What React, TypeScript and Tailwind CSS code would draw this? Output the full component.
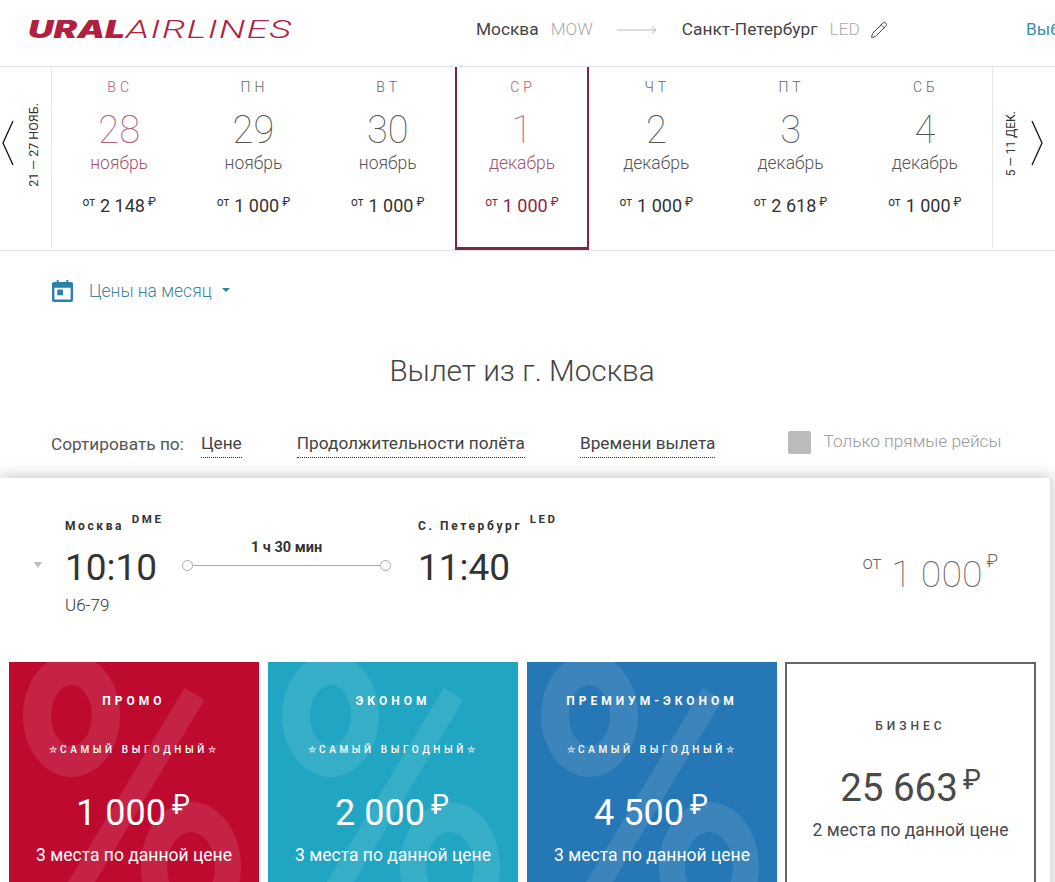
import { Pencil } from 'lucide-react'

const roboto = "font-['Roboto',sans-serif]"

const days = [
  { wd: 'ВС', num: '28', month: 'ноябрь', price: '2 148', tone: 'weekend' },
  { wd: 'ПН', num: '29', month: 'ноябрь', price: '1 000', tone: 'normal' },
  { wd: 'ВТ', num: '30', month: 'ноябрь', price: '1 000', tone: 'normal' },
  { wd: 'СР', num: '1', month: 'декабрь', price: '1 000', tone: 'active' },
  { wd: 'ЧТ', num: '2', month: 'декабрь', price: '1 000', tone: 'normal' },
  { wd: 'ПТ', num: '3', month: 'декабрь', price: '2 618', tone: 'normal' },
  { wd: 'СБ', num: '4', month: 'декабрь', price: '1 000', tone: 'normal' },
]

const fares = [
  { name: 'ПРОМО', price: '1 000', bg: 'bg-[#bf0a30]' },
  { name: 'ЭКОНОМ', price: '2 000', bg: 'bg-[#20a5c2]' },
  { name: 'ПРЕМИУМ-ЭКОНОМ', price: '4 500', bg: 'bg-[#2577b5]' },
]

function Day({ d }: { d: (typeof days)[number] }) {
  const active = d.tone === 'active'
  const weekend = d.tone === 'weekend'
  const wdColor = active || weekend ? 'text-[#b4596f]' : 'text-[#666]'
  const numColor = active || weekend ? 'text-[#b3617a]' : 'text-[#555]'
  const monthColor = active || weekend ? 'text-[#a8536c]' : 'text-[#555]'
  const priceColor = active ? 'text-[#8f1f45]' : 'text-[#333]'
  return (
    <div
      className={`flex flex-col items-center pt-[12px] ${
        active ? 'border-x-[2px] border-b-[3px] border-[#7d2747]' : ''
      }`}
    >
      <div className={`text-[14px] leading-[16px] font-light tracking-[4px] pl-[2px] ${wdColor}`}>{d.wd}</div>
      <div className={`text-[38px] leading-[44px] font-thin mt-[13px] ${numColor}`}>{d.num}</div>
      <div className={`text-[17.5px] leading-[20px] font-light mt-[1px] ${monthColor}`}>{d.month}</div>
      <div className={`flex items-start mt-[21px] ${priceColor}`}>
        <span className="text-[12px] leading-[16px] mr-[5px]">от</span>
        <span className="text-[18px] leading-[22px] mt-[1px]">{d.price}</span>
        <span className="text-[12px] leading-[16px] ml-[3px]">₽</span>
      </div>
    </div>
  )
}

function SortLink({ label, className }: { label: string; className?: string }) {
  return (
    <span className={`text-[17.25px] leading-[22px] text-[#444] border-b border-dotted border-[#333] pb-[3px] ${className ?? ''}`}>
      {label}
    </span>
  )
}

// big faded percent sign behind the fare text
function PercentBg() {
  return (
    <div className="absolute inset-0 opacity-[0.1]" aria-hidden="true">
      <div className="absolute left-[14px] top-[-8px] w-[97px] h-[123px] rounded-[50%] border-x-[28px] border-y-[31px] border-white" />
      <div className="absolute left-[174px] top-[32px] w-[23px] h-[260px] bg-white origin-top rotate-[31deg]" />
      <div className="absolute left-[132px] top-[140px] w-[100px] h-[130px] rounded-[50%] border-x-[26px] border-y-[30px] border-white" />
    </div>
  )
}

function FareCard({ f }: { f: (typeof fares)[number] }) {
  return (
    <div className={`relative overflow-hidden w-[250px] h-[260px] shrink-0 flex flex-col items-center text-white ${f.bg}`}>
      <PercentBg />
      <div className="relative text-[12px] leading-[16px] font-bold tracking-[4px] mt-[31px]">{f.name}</div>
      <div className="relative text-[10px] leading-[14px] font-medium tracking-[3.6px] mt-[34px]">✮САМЫЙ ВЫГОДНЫЙ✮</div>
      <div className="relative flex items-start mt-[34px] -ml-[2px]">
        <span className="text-[36px] leading-[44px]">{f.price}</span>
        <span className="text-[27px] leading-[28px] ml-[6px]">₽</span>
      </div>
      <div className="relative text-[17.5px] leading-[22px] mt-[9px]">3 места по данной цене</div>
    </div>
  )
}

export default function App() {
  return (
    <div className={`w-[1055px] h-[882px] overflow-hidden bg-white ${roboto}`}>
      {/* header */}
      <header className="h-[67px] flex items-center border-b border-[#e4e4e4] relative">
        <div className="ml-[28px] w-[448px] flex items-baseline text-[#b1203f] leading-none -mt-[8px]">
          <span className="font-['Inter',sans-serif] font-black italic text-[24px] inline-block origin-left scale-x-[1.47] w-[98px]">URAL</span>
          <span className="font-light italic text-[25px] inline-block origin-left scale-x-[1.52] tracking-[1px]">AIRLINES</span>
        </div>
        <div className="flex items-center -mt-[6px]">
          <span className="text-[17.3px] text-[#444]">Москва</span>
          <span className="text-[17.3px] text-[#aaa] font-light ml-[12px]">MOW</span>
          <svg className="ml-[24px]" width="40" height="10" viewBox="0 0 40 10" fill="none" stroke="#bbb">
            <path d="M0 5h39M35 2l4 3-4 3" />
          </svg>
          <span className="text-[17.3px] text-[#444] ml-[25px]">Санкт-Петербург</span>
          <span className="text-[17.3px] text-[#aaa] font-light ml-[12px]">LED</span>
          <Pencil className="ml-[10px] text-[#444]" size={18} strokeWidth={1.3} />
        </div>
        <span className="absolute left-[1026px] top-[17px] text-[17.3px] text-[#3b8ea8] whitespace-nowrap">Выбрать</span>
      </header>

      {/* calendar strip */}
      <div className="h-[184px] flex border-b border-[#e4e4e4]">
        <div className="w-[52px] shrink-0 border-r border-[#e8e8e8] flex items-center h-[182px]">
          <svg className="ml-[2px] -mt-[30px]" width="12" height="46" viewBox="0 0 12 46" fill="none" stroke="#111" strokeWidth="1.3">
            <path d="M11 1L1 23l10 22" />
          </svg>
          <div className="ml-[11px] -mt-[26px] [writing-mode:vertical-rl] rotate-180 text-[12.500px] text-[#333] whitespace-nowrap">21 — 27 НОЯБ.</div>
        </div>
        <div className="flex-1 grid grid-cols-7">
          {days.map((d) => (
            <Day key={d.num} d={d} />
          ))}
        </div>
        <div className="w-[63px] shrink-0 border-l border-[#e8e8e8] flex items-center h-[182px]">
          <div className="ml-[9px] -mt-[28px] [writing-mode:vertical-rl] rotate-180 text-[12px] text-[#333] whitespace-nowrap">5 — 11 ДЕК.</div>
          <svg className="ml-[11px] -mt-[30px]" width="12" height="46" viewBox="0 0 12 46" fill="none" stroke="#111" strokeWidth="1.3">
            <path d="M1 1l10 22L1 45" />
          </svg>
        </div>
      </div>

      {/* month prices */}
      <div className="flex items-center ml-[52px] mt-[27px] h-[26px]">
        <svg width="21" height="22" viewBox="0 0 22 23" fill="#2a82ab">
          <path d="M5 0h2v2h8V0h2v2h3a2 2 0 0 1 2 2v17a2 2 0 0 1-2 2H2a2 2 0 0 1-2-2V4a2 2 0 0 1 2-2h3zM2.500 8v12.500h17V8z" fillRule="evenodd" />
          <rect x="5.500" y="10" width="6" height="6" />
        </svg>
        <span className="ml-[16px] text-[17.5px] font-light text-[#3f86a0]">Цены на месяц</span>
        <span className="ml-[10px] -mt-[2px] w-0 h-0 border-x-[4px] border-x-transparent border-t-[4px] border-t-[#2a82ab]" />
      </div>

      <h1 className="text-center text-[29.7px] leading-[36px] font-light text-[#444] mt-[49px] pr-[11px]">Вылет из г. Москва</h1>

      {/* sort */}
      <div className="flex items-center ml-[51px] mt-[40px] h-[32px] relative">
        <span className="text-[17.25px] text-[#555] font-normal">Сортировать по:</span>
        <SortLink label="Цене" className="ml-[17px]" />
        <SortLink label="Продолжительности полёта" className="ml-[55px]" />
        <SortLink label="Времени вылета" className="ml-[55px]" />
        <span className="ml-[73px] -mt-[6px] w-[23px] h-[23px] rounded-[2px] bg-[#bbb]" />
        <span className="ml-[12px] text-[17.25px] font-light text-[#999] -mt-[7px]">Только прямые рейсы</span>
      </div>

      {/* flight panel */}
      <section className="mt-[17px] w-[1052px] h-[420px] bg-white border-r-2 border-[#e2e2e2] shadow-[0_-2px_14px_rgba(0,0,0,0.22)] relative">
        <div className="h-[184px] flex relative">
          <span className="mt-[84px] ml-[34px] w-0 h-0 border-x-[4px] border-x-transparent border-t-[6px] border-t-[#bbb]" />
          <div className="ml-[23px] mt-[35px] w-[112px]">
            <div className="text-[12px] leading-[26px] font-bold tracking-[2.6px] text-[#333] whitespace-nowrap">
              Москва <sup className="text-[11.500px] leading-none ml-[2px] -top-[7px] relative align-baseline">DME</sup>
            </div>
            <div className="text-[37px] leading-[42px] text-[#333] mt-[8px]">10:10</div>
            <div className="text-[17px] leading-[20px] font-light text-[#333] mt-[6px]">U6-79</div>
          </div>
          <div className="ml-[5px] mt-[62px] w-[209px] flex flex-col items-center">
            <div className="text-[14.5px] leading-[16px] font-bold text-[#333]">1 ч 30 мин</div>
            <div className="flex items-center w-full mt-[4px]">
              <span className="w-[11px] h-[11px] rounded-full border border-[#aaa] shrink-0" />
              <span className="flex-1 h-px bg-[#aaa]" />
              <span className="w-[11px] h-[11px] rounded-full border border-[#aaa] shrink-0" />
            </div>
          </div>
          <div className="ml-[27px] mt-[35px]">
            <div className="text-[12px] leading-[26px] font-bold tracking-[2.6px] text-[#333] whitespace-nowrap">
              С. Петербург <sup className="text-[11.500px] leading-none ml-[2px] -top-[7px] relative align-baseline">LED</sup>
            </div>
            <div className="text-[37px] leading-[42px] text-[#333] mt-[8px]">11:40</div>
          </div>
          <div className="ml-auto mr-[52px] mt-[72px] flex items-start text-[#666] h-[48px]">
            <span className="text-[18.500px] leading-[22px] font-light mt-[2px] mr-[10px]">от</span>
            <span className="text-[37.5px] leading-[48px] font-thin">1 000</span>
            <span className="text-[18px] leading-[22px] font-light ml-[4px]">₽</span>
          </div>
        </div>
        <div className="flex gap-[9px] pl-[9px]">
          {fares.map((f) => (
            <FareCard key={f.name} f={f} />
          ))}
          <div className="w-[251px] h-[260px] shrink-0 border-2 border-[#666] flex flex-col items-center text-[#4a4a4a] -ml-[1px]">
            <div className="text-[12px] leading-[16px] font-medium tracking-[4px] mt-[54px]">БИЗНЕС</div>
            <div className="flex items-start mt-[32px]">
              <span className="text-[38.5px] leading-[44px]">25 663</span>
              <span className="text-[27px] leading-[28px] ml-[5px]">₽</span>
            </div>
            <div className="text-[17.5px] leading-[22px] mt-[9px]">2 места по данной цене</div>
          </div>
        </div>
      </section>
    </div>
  )
}
